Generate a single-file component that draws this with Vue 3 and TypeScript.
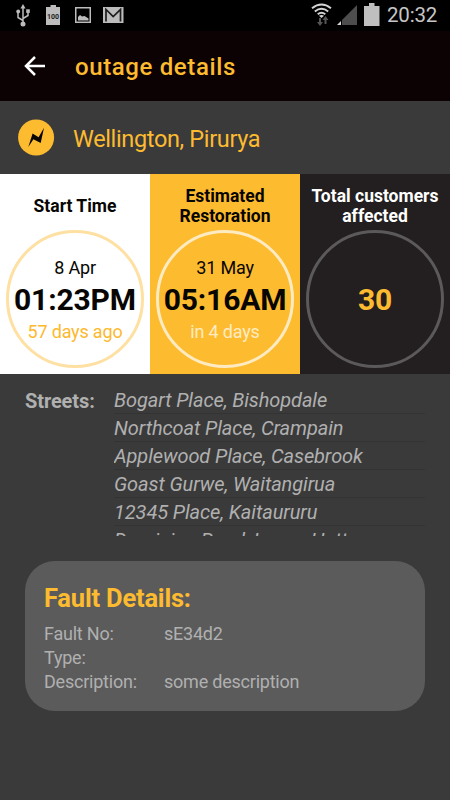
<script setup lang="ts">
interface Card {
  kind: string
  title: string[]
  date?: string
  value: string
  note?: string
}

const cards: Card[] = [
  { kind: 'start', title: ['Start Time'], date: '8 Apr', value: '01:23PM', note: '57 days ago' },
  { kind: 'restore', title: ['Estimated', 'Restoration'], date: '31 May', value: '05:16AM', note: 'in 4 days' },
  { kind: 'total', title: ['Total customers', 'affected'], value: '30' },
]

const streets: string[] = [
  'Bogart Place, Bishopdale',
  'Northcoat Place, Crampain',
  'Applewood Place, Casebrook',
  'Goast Gurwe, Waitangirua',
  '12345 Place, Kaitaururu',
  'Dominion Road, Lower Hutt',
]

const details: { label: string; value: string }[] = [
  { label: 'Fault No:', value: 'sE34d2' },
  { label: 'Type:', value: '' },
  { label: 'Description:', value: 'some description' },
]
</script>

<template>
  <main class="screen">
    <div class="status">
      <svg class="status-left" width="150" height="31" viewBox="0 0 150 31">
        <g fill="none" stroke="#bcbcbc" stroke-width="1.5">
          <path d="M23 24V7M23 20.500L18 17.500V12M23 18.500L28 15.500V11" />
        </g>
        <g fill="#bcbcbc">
          <path d="M23 4l2.500 4.500h-5z" />
          <circle cx="23" cy="24" r="2.500" />
          <circle cx="18.200" cy="11.500" r="1.900" />
          <path d="M26.200 9.300h3.600v3.600h-3.600z" />
          <path d="M46 7h4.500V5h5.500v2h4v18H46z" />
          <path fill-rule="evenodd" d="M75 7h16v16H75zM76.500 8.500v13h13v-13z" />
          <path d="M78 20.500V17l2-2 2 1.500 2.500-.5 4 2.500v2z" />
          <path d="M103 7h20.500v16H103z" />
        </g>
        <path d="M106 21.500V9.500l7.200 7 7.300-7v12" fill="none" stroke="#1c1c1c" stroke-width="1.700" />
        <text class="battery-level" x="53" y="18.500" text-anchor="middle">100</text>
      </svg>
      <div class="status-right">
        <svg width="75" height="31" viewBox="0 0 75 31">
          <g fill="none" stroke="#d4d4d4" stroke-width="1.900">
            <path d="M2 8.200Q11.500.8 21 8.200M4.800 11.400q6.700-5.200 13.400 0M7.700 14.300q3.800-2.900 7.600 0" />
          </g>
          <path d="M9 15.800q2.500-1.500 5 0L11.500 18z" fill="#d4d4d4" />
          <path d="M9 18h2v4h2l-3 4-3-4h2zM14.500 24v-4h-2l3-4 3 4h-2v4z" fill="#555" />
          <path d="M47 5v20H32V20z" fill="#4d4d4d" />
          <path d="M31 21v4h-4z" fill="#d4d4d4" />
          <path d="M54 6h5V3h5.500v3H69.500v20H54z" fill="#bfbfbf" />
        </svg>
        <span class="clock">20:32</span>
      </div>
    </div>

    <header class="app-bar">
      <svg width="22" height="22" viewBox="0 0 22 22">
        <path d="M21 11H3M11 2L2 11l9 9" fill="none" stroke="#fff" stroke-width="2.500" />
      </svg>
      <h1>outage details</h1>
    </header>

    <section class="location">
      <svg width="37" height="37" viewBox="0 0 37 37">
        <circle cx="18.100" cy="18.500" r="18" fill="#fdbb30" />
        <path d="M10.300 28L14.600 14.500l6 3.800L26 8.700 22.700 24l-7.300-3.800z" fill="#080603" />
      </svg>
      <span>Wellington, Pirurya</span>
    </section>

    <section class="cards">
      <article v-for="card in cards" :key="card.kind" class="card" :class="card.kind">
        <h2><span v-for="line in card.title" :key="line">{{ line }}</span></h2>
        <div class="ring">
          <span v-if="card.date" class="date">{{ card.date }}</span>
          <strong>{{ card.value }}</strong>
          <span v-if="card.note" class="note">{{ card.note }}</span>
        </div>
      </article>
    </section>

    <section class="streets">
      <h3>Streets:</h3>
      <ul>
        <li v-for="street in streets" :key="street">{{ street }}</li>
      </ul>
    </section>

    <section class="fault">
      <h3>Fault Details:</h3>
      <dl v-for="row in details" :key="row.label">
        <dt>{{ row.label }}</dt>
        <dd>{{ row.value }}</dd>
      </dl>
    </section>
  </main>
</template>

<style>
body {
  background: #3a3a3a;
}
</style>

<style scoped>
.screen {
  width: 450px;
  height: 800px;
  overflow: hidden;
  background: #3a3a3a;
  font-family: Roboto, sans-serif;
  color: #b0b0b0;
}
h1, h2, h3, ul, dl, dd {
  margin: 0;
  padding: 0;
}
.status {
  height: 31px;
  background: #000;
  display: flex;
  justify-content: space-between;
}
.battery-level {
  font: bold 7px Roboto, sans-serif;
  fill: #222;
}
.status-right {
  display: flex;
  width: 140px;
  gap: 2px;
}
.clock {
  font-size: 20.500px;
  line-height: 31px;
  letter-spacing: -0.200px;
  color: #c6c6c6;
}
.app-bar {
  box-sizing: border-box;
  height: 70px;
  padding: 0 24px;
  background: #0c0203;
  display: flex;
  align-items: center;
  gap: 29px;
}
.app-bar h1 {
  font-size: 24px;
  font-weight: 500;
  line-height: 28px;
  padding-top: 2px;
  letter-spacing: 0.620px;
  color: #fdbb30;
}
.location {
  height: 73px;
  padding-left: 18px;
  display: flex;
  align-items: center;
  gap: 18px;
  font-size: 23.500px;
  letter-spacing: -0.350px;
  color: #fdbb30;
}
.location span {
  line-height: 30px;
  padding-top: 2px;
}
.cards {
  display: grid;
  grid-template-columns: repeat(3, 150px);
  height: 200px;
}
.card {
  display: flex;
  flex-direction: column;
  align-items: center;
  color: #080603;
}
.card h2 {
  height: 56px;
  padding-top: 2px;
  box-sizing: border-box;
  margin-top: 3px;
  display: flex;
  flex-direction: column;
  justify-content: center;
  text-align: center;
  font-size: 17.500px;
  font-weight: 700;
  line-height: 20px;
  white-space: nowrap;
}
.ring {
  box-sizing: border-box;
  width: 138px;
  height: 138px;
  margin-top: -3px;
  padding-top: 2px;
  border: 3px solid;
  border-radius: 50%;
  display: flex;
  flex-direction: column;
  align-items: center;
  justify-content: center;
  white-space: nowrap;
}
.ring strong {
  font-size: 30px;
  line-height: 34px;
  font-weight: 700;
  letter-spacing: -0.150px;
}
.date, .note {
  font-size: 18px;
  line-height: 30px;
  letter-spacing: -0.180px;
}
.start {
  background: #fff;
}
.start .ring {
  border-color: #fee0a2;
}
.start .note {
  color: #fdb92e;
}
.restore {
  background: #fdbb30;
}
.restore .ring {
  border-color: #feebc2;
}
.restore .note {
  color: #feebc2;
}
.total {
  background: #231f20;
}
.total h2 {
  color: #fff;
}
.total .ring {
  border-color: #5b5959;
}
.total strong {
  color: #fdbb30;
}
.streets {
  height: 150px;
  padding: 12px 25px 0;
  display: grid;
  grid-template-columns: 89px 1fr;
  font-size: 20px;
  line-height: 28px;
  letter-spacing: -0.100px;
}
.streets h3 {
  font-size: 20px;
  line-height: 30px;
}
.streets ul {
  list-style: none;
  overflow: hidden;
}
.streets li {
  box-sizing: border-box;
  height: 28px;
  border-bottom: 1px solid #333;
  font-style: italic;
  white-space: nowrap;
}
.fault {
  box-sizing: border-box;
  width: 400px;
  height: 150px;
  margin: 25px 25px 0;
  padding: 20px 19px 0;
  border-radius: 30px;
  background: #5b5b5b;
}
.fault h3 {
  font-size: 25.500px;
  line-height: 34px;
  margin-bottom: 7px;
  letter-spacing: -0.200px;
  color: #fdbb30;
}
.fault dl {
  display: grid;
  grid-template-columns: 120px 1fr;
  height: 24px;
  font-size: 18px;
  line-height: 24px;
  letter-spacing: -0.220px;
}
</style>
